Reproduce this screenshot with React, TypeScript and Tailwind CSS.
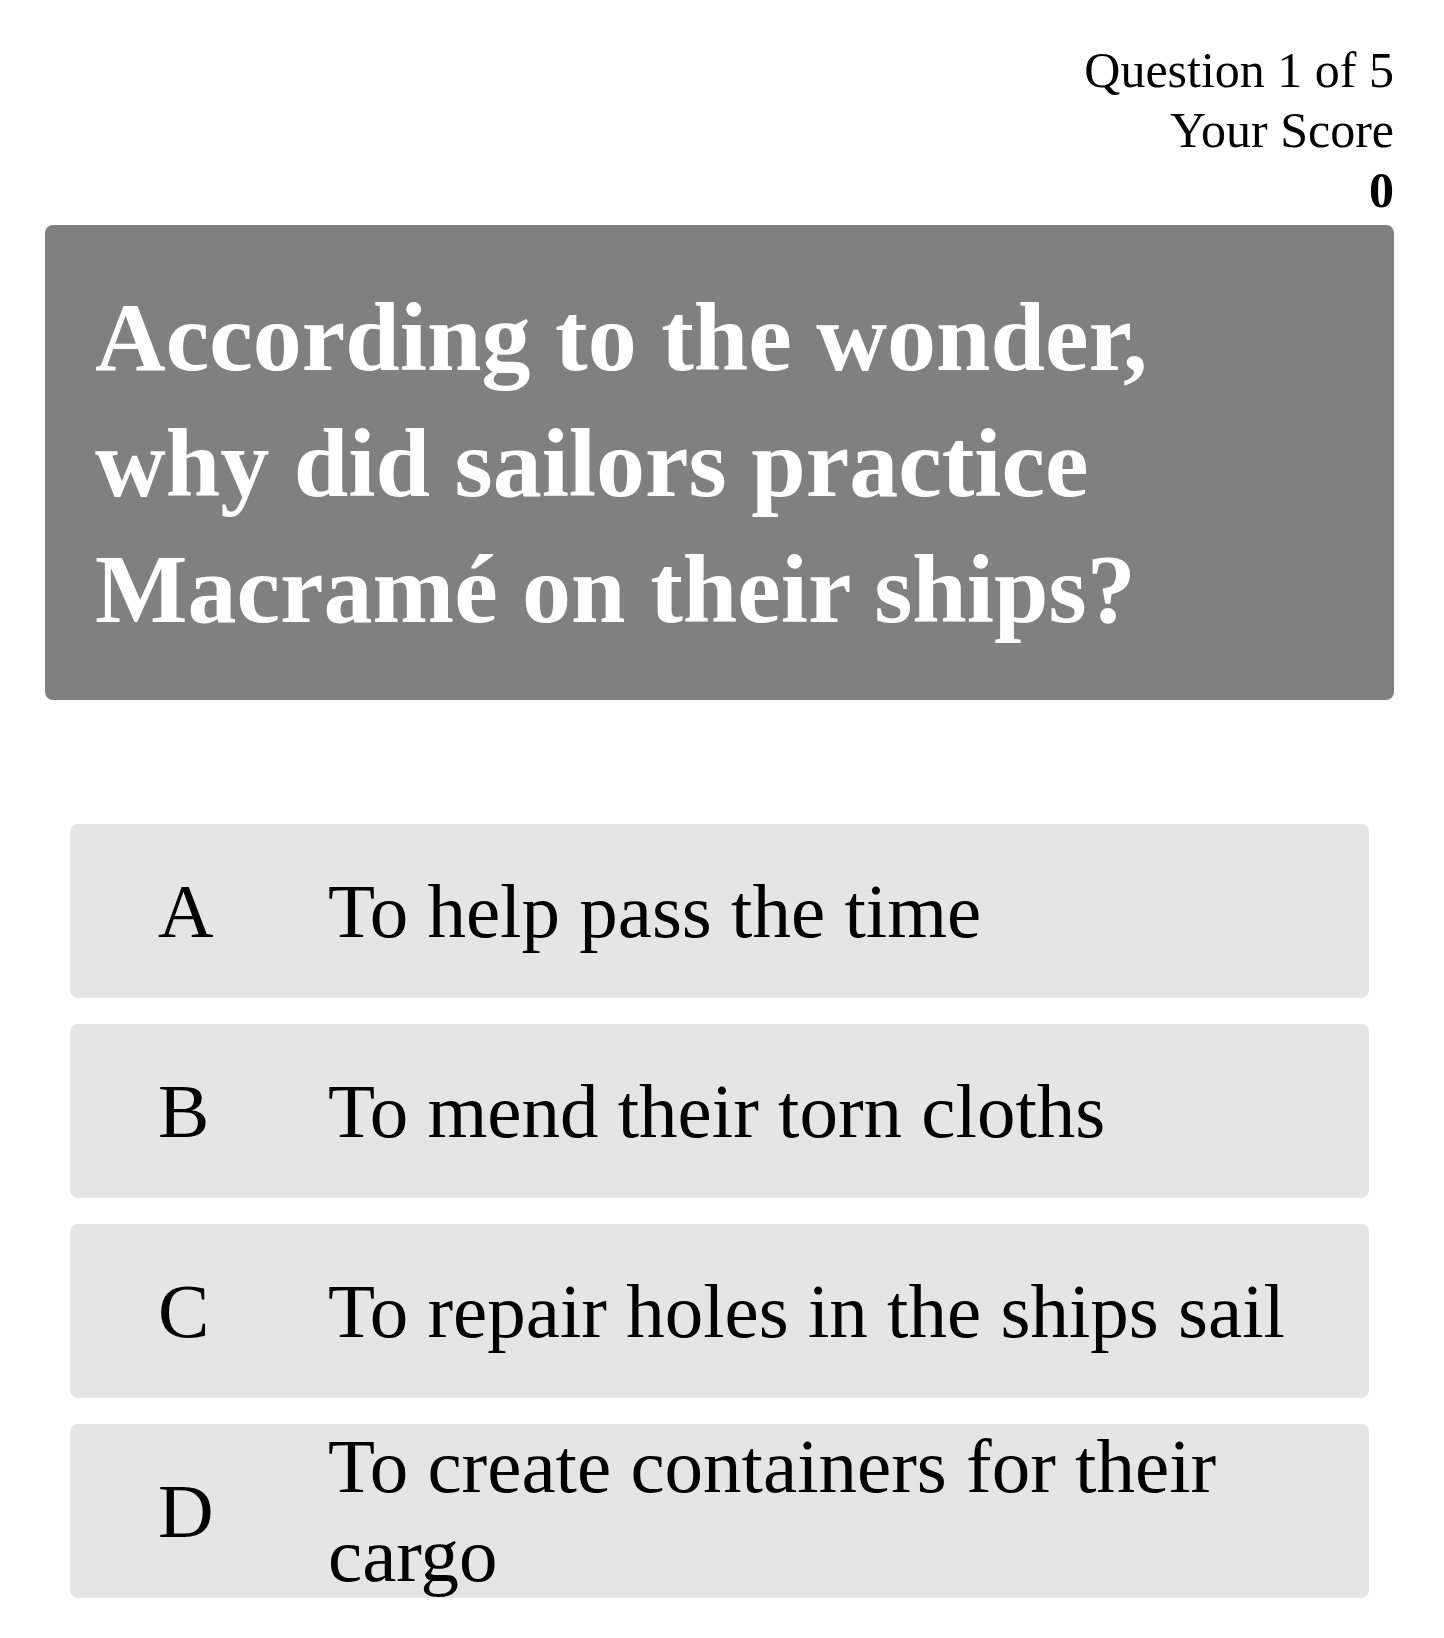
import React from 'react';

interface Option {
  letter: string;
  text: string;
}

const options: Option[] = [
  { letter: 'A', text: 'To help pass the time' },
  { letter: 'B', text: 'To mend their torn cloths' },
  { letter: 'C', text: 'To repair holes in the ships sail' },
  { letter: 'D', text: 'To create containers for their cargo' },
];

const serif = { fontFamily: '"Liberation Serif", "Times New Roman", serif' };

const OptionCard = ({ option }: { option: Option }) => (
  <button className="w-full h-[174px] bg-[#e5e5e5] rounded-lg flex items-center pl-[88px] pr-[40px] text-left text-black">
    <span className="w-[170px] flex-none text-[77px] leading-[89px]">{option.letter}</span>
    <span className="flex-1 text-[77px] leading-[89px]">{option.text}</span>
  </button>
);

export default function App() {
  return (
    <div className="min-h-screen bg-white pt-[40px] pl-[45px] pr-[50px] pb-[39px]" style={serif}>
      {/* Header */}
      <div className="text-right text-black text-[50px] leading-[60px]">
        <p>Question 1 of 5</p>
        <p>Your Score</p>
        <p className="font-bold">0</p>
      </div>

      {/* Question */}
      <div className="mt-[5px] bg-[#808080] rounded-lg px-[50px] pt-[49px] pb-[48px]">
        <h1 className="max-w-[1180px] text-white font-bold text-[98px] leading-[126px]">
          According to the wonder, why did sailors practice Macramé on their ships?
        </h1>
      </div>

      {/* Answers */}
      <div className="mt-[124px] px-[25px] flex flex-col gap-[26px]">
        {options.map((o) => (
          <OptionCard key={o.letter} option={o} />
        ))}
      </div>
    </div>
  );
}
